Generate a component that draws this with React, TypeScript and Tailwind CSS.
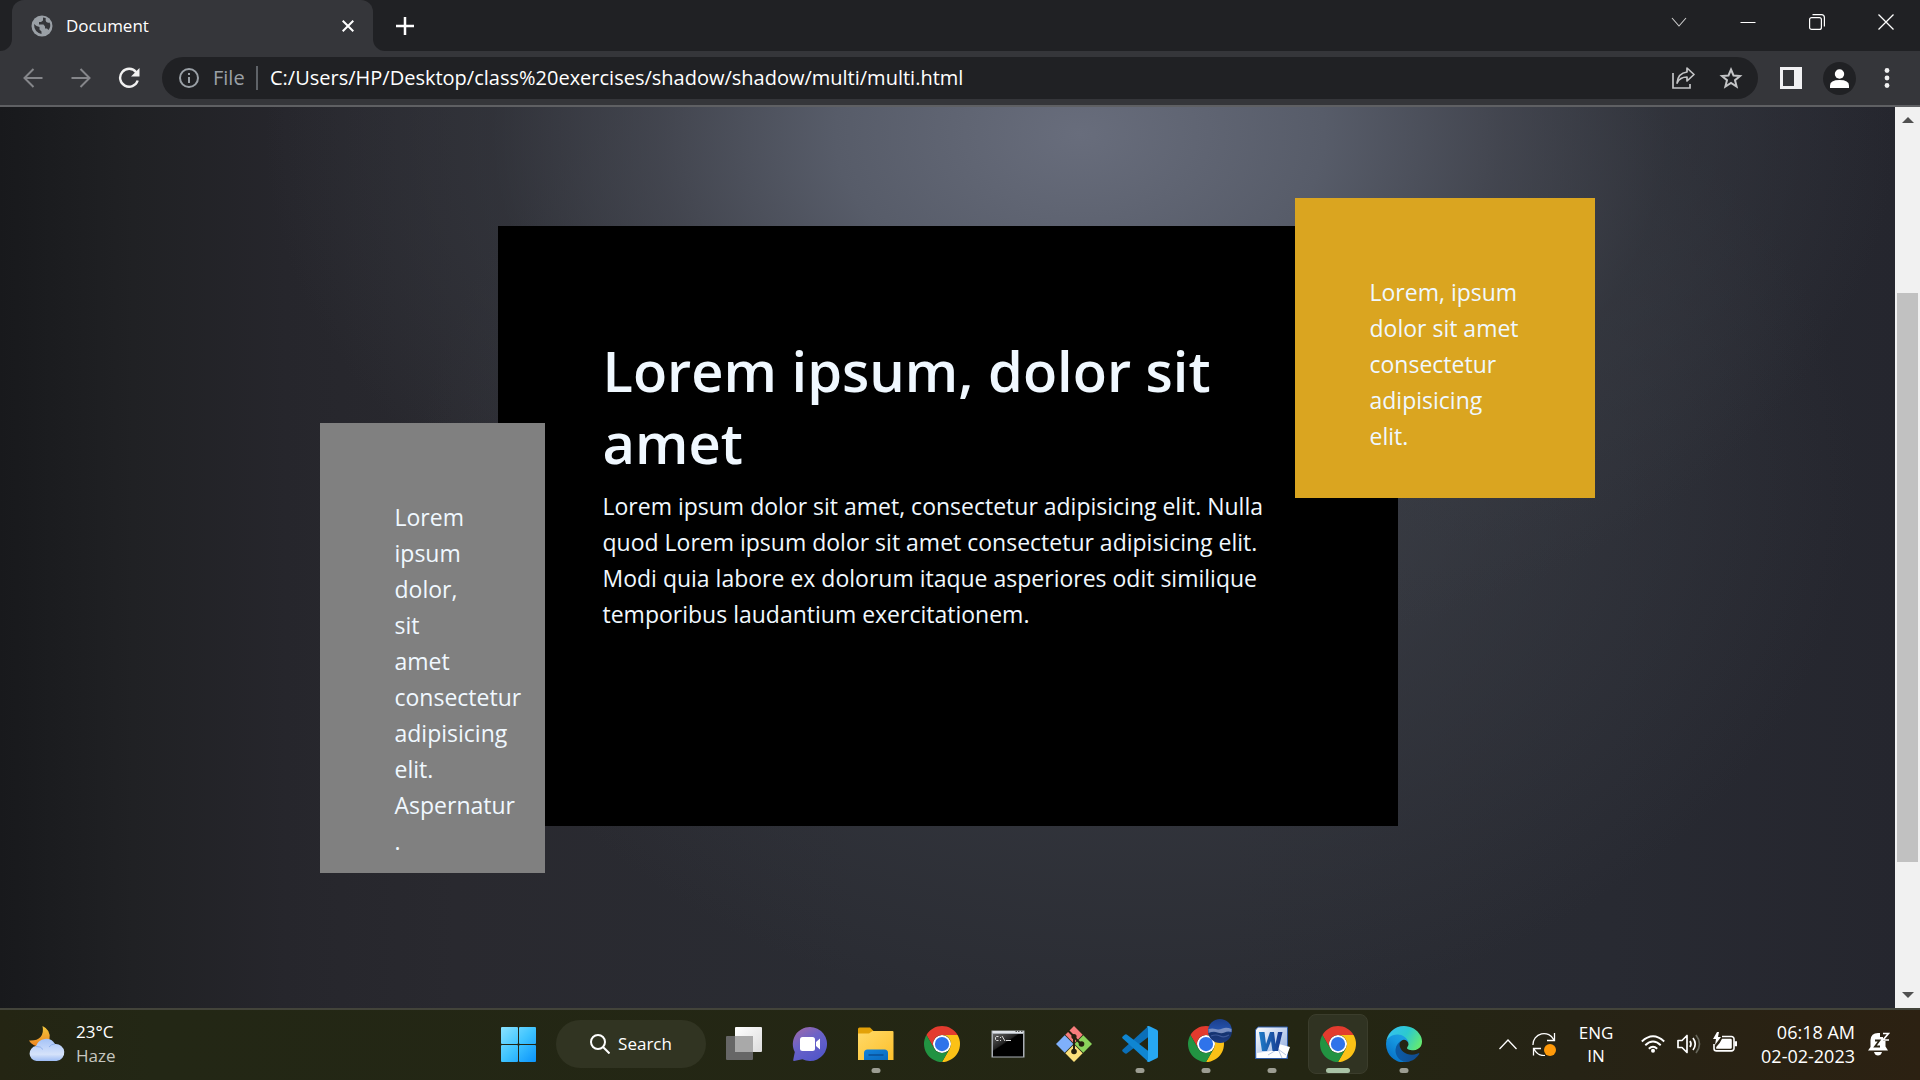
import React from "react";

function ChromeLogo() {
  return (
    <svg viewBox="0 0 48 48" className="h-9 w-9">
      <circle cx="24" cy="24" r="12" fill="#fff" />
      <path fill="#e33b2e" d="M24,12H44.78a24,24,0,0,0-41.56,0L13.61,30l.01,0A11.99,11.99,0,0,1,24,12Z" />
      <path fill="#fbc116" d="M34.39,30,24,48A24,24,0,0,0,44.78,12H24l0,.01A11.99,11.99,0,0,1,34.39,30Z" />
      <path fill="#229342" d="M13.61,30,3.22,12A24,24,0,0,0,24,48L34.39,30l0,0a11.99,11.99,0,0,1-20.78,0Z" />
      <circle cx="24" cy="24" r="9.5" fill="#2f73ea" />
    </svg>
  );
}

function ProfileChromeLogo() {
  return (
    <span className="relative">
      <ChromeLogo />
      <svg viewBox="0 0 24 24" className="absolute -top-[7px] left-5 h-6 w-6">
        <defs>
          <linearGradient id="sky" x1="0" y1="0" x2="0" y2="1">
            <stop offset="0" stopColor="#1b3f8c" />
            <stop offset=".4" stopColor="#2450a8" />
            <stop offset=".6" stopColor="#16336f" />
            <stop offset="1" stopColor="#1c3a80" />
          </linearGradient>
        </defs>
        <circle cx="12" cy="12" r="12" fill="url(#sky)" />
        <path d="M.5 10q4-1 7 0t7-.5 9 .5v3q-4-1-7 .5t-7 0-9 .5z" fill="#8fa0cc" opacity=".8" />
        <path d="M3 17q5-2 9 0t9-1" stroke="#3c5798" strokeWidth="1.200" fill="none" />
      </svg>
    </span>
  );
}

function StartLogo() {
  return (
    <svg viewBox="0 0 35 35" className="h-[35px] w-[35px]">
      <defs>
        <linearGradient id="win" gradientUnits="userSpaceOnUse" x1="0" y1="0" x2="35" y2="35">
          <stop offset="0" stopColor="#8be3ff" />
          <stop offset=".5" stopColor="#3fc4ff" />
          <stop offset="1" stopColor="#0a93fb" />
        </linearGradient>
      </defs>
      <g fill="url(#win)">
        <rect width="17" height="17" rx="1" />
        <rect x="18" width="17" height="17" rx="1" />
        <rect y="18" width="17" height="17" rx="1" />
        <rect x="18" y="18" width="17" height="17" rx="1" />
      </g>
    </svg>
  );
}

function TaskViewIcon() {
  return (
    <svg viewBox="0 0 36 36" className="h-9 w-9">
      <defs>
        <linearGradient id="tv" x1="0" y1="0" x2="1" y2="1">
          <stop offset="0" stopColor="#fff" />
          <stop offset="1" stopColor="#dcdcdc" />
        </linearGradient>
      </defs>
      <rect y="10" width="27" height="24" rx="1" fill="#666" />
      <rect x="9" y="1" width="27" height="25" rx="1" fill="url(#tv)" />
      <path d="M9 10h18v16H9z" fill="#a9a9a9" />
    </svg>
  );
}

function ChatIcon() {
  return (
    <svg viewBox="0 0 36 36" className="h-9 w-9">
      <defs>
        <linearGradient id="chat" x1="0" y1="0" x2=".6" y2="1">
          <stop offset="0" stopColor="#a46aa6" />
          <stop offset=".5" stopColor="#6a62c8" />
          <stop offset="1" stopColor="#5357c9" />
        </linearGradient>
      </defs>
      <path d="M18 1a17 17 0 1 1-7.600 32.200L2 35q-1-.2-.8-1l1.600-8A17 17 0 0 1 18 1z" fill="url(#chat)" />
      <rect x="8" y="11" width="15" height="14" rx="2.500" fill="#fff" />
      <path d="M24 16l4-3.500V23.500L24 20z" fill="#fff" />
    </svg>
  );
}

function ExplorerIcon() {
  return (
    <svg viewBox="0 0 36 36" className="h-9 w-9">
      <defs>
        <linearGradient id="fold" x1="0" y1="0" x2="1" y2="1">
          <stop offset="0" stopColor="#ffd968" />
          <stop offset="1" stopColor="#fdc02b" />
        </linearGradient>
        <linearGradient id="tray" x1="0" y1="0" x2="1" y2="1">
          <stop offset="0" stopColor="#1383dc" />
          <stop offset="1" stopColor="#0a69bd" />
        </linearGradient>
      </defs>
      <path d="M0 3q0-1.500 1.500-1.500H12L15.500 5 12 9H0z" fill="#e3a108" />
      <path d="M0 7.500h11L14.500 5H34.500q1 0 1 1V34H0z" fill="url(#fold)" />
      <path d="M6 34V27q0-3.500 3.500-3.500h17q3.500 0 3.500 3.500v7z" fill="url(#tray)" />
      <path d="M10.500 29h15" stroke="#0a4f96" strokeWidth="1.500" />
    </svg>
  );
}

function TerminalIcon() {
  return (
    <svg viewBox="0 0 36 36" className="h-9 w-9">
      <defs>
        <linearGradient id="cmd" x1="0" y1="0" x2=".7" y2=".8">
          <stop offset="0" stopColor="#666" />
          <stop offset=".5" stopColor="#222" />
          <stop offset=".55" stopColor="#000" />
        </linearGradient>
      </defs>
      <rect x="1.500" y="4.500" width="33" height="27" fill="#a9aeb5" />
      <rect x="2.500" y="5" width="31" height="2" fill="#dfe3e8" />
      <path d="M25.500 5.500h1.500m1 0h1.500m1.500 0h1.500" stroke="#555" />
      <rect x="3" y="8" width="30" height="22.500" fill="url(#cmd)" />
      <path d="M8.500 10.500H6.500L5.500 11.500v2l1 1h2M10.500 11v1M10.500 14v1M12 10l3 5M16 14.500h5" stroke="#ddd" fill="none" />
    </svg>
  );
}

function GitIcon() {
  return (
    <svg viewBox="0 0 36 36" className="h-9 w-9">
      <path fill="#f77c7c" d="M18 0l8.700 8.700L18 17.400 9.300 8.700z" />
      <path fill="#7fb0fb" d="M8.700 9.300L17.400 18 8.700 26.700 0 18z" />
      <path fill="#8bd35c" d="M27.300 9.300L36 18 27.300 26.700 18.600 18z" />
      <path fill="#fbe07c" d="M18 18.600l8.700 8.700L18 36 9.300 27.300z" />
      <path d="M12 4.500l6 6V25M18 11l7 7" stroke="#25200f" strokeWidth="2" fill="none" />
      <circle cx="18" cy="10.500" r="2.600" fill="#25200f" />
      <circle cx="18" cy="25.500" r="2.800" fill="#25200f" />
      <circle cx="25.500" cy="18" r="2.800" fill="#25200f" />
    </svg>
  );
}

function CodeIcon() {
  return (
    <svg viewBox="0 0 36 36" className="h-9 w-9">
      <path fill="#0b6fb8" d="M26.500 0L.7 23.400q-1 1.100 0 2.200l2 1.700q1 .8 2 .1L27 10.500z" />
      <path fill="#0f86d2" d="M26.500 36L.7 12.600q-1-1.100 0-2.200l2-1.700q1-.8 2-.1L27 25.500z" />
      <path fill="#27a7f2" d="M24.600 35q1.900 1.300 2.900.7l7.300-3.400q1.200-.6 1.200-1.900V5.600q0-1.300-1.200-1.900L27.500.3q-1.500-.6-2.900.8Q26 .6 26 3v30q0 2-1.400 2z" />
    </svg>
  );
}

function WordIcon() {
  return (
    <svg viewBox="0 0 36 36" className="h-9 w-9">
      <defs>
        <linearGradient id="wd" x1="0" y1="0" x2="1" y2="1">
          <stop offset="0" stopColor="#fff" />
          <stop offset=".4" stopColor="#cfdcf2" />
          <stop offset="1" stopColor="#8aa7dc" />
        </linearGradient>
        <linearGradient id="wl" x1="0" y1="0" x2="1" y2="0">
          <stop offset="0" stopColor="#1f7cc8" />
          <stop offset="1" stopColor="#15348b" />
        </linearGradient>
      </defs>
      <path d="M4 1H33.500V32.500H1.500V4z" fill="url(#wd)" stroke="#2f5ca8" />
      <path d="M3 32V27l20-3 2-6 11 3-4 11z" fill="#fff" />
      <path d="M14 29l10-6 8 6M24 23l4 9" stroke="#b9c7e2" fill="none" />
      <path d="M5 6h5.500l1.500 12L16 6h4l1.500 12L24 6h4.500L24 25h-5.500L17 15l-4 10H8z" fill="url(#wl)" />
    </svg>
  );
}

function EdgeIcon() {
  return (
    <svg viewBox="4.600 2.500 256 256" className="h-9 w-9">
      <defs>
        <linearGradient id="e1" x1=".2" y1=".5" x2="1" y2=".5">
          <stop offset="0" stopColor="#0c59a4" />
          <stop offset="1" stopColor="#114a8b" />
        </linearGradient>
        <linearGradient id="e2" x1=".8" y1=".2" x2=".3" y2="1">
          <stop offset="0" stopColor="#1b9de2" />
          <stop offset=".3" stopColor="#1595df" />
          <stop offset="1" stopColor="#0670c6" />
        </linearGradient>
        <linearGradient id="e3" x1="0" y1=".3" x2="1" y2=".7">
          <stop offset="0" stopColor="#35c1f1" />
          <stop offset=".5" stopColor="#2cc9cf" />
          <stop offset="1" stopColor="#66eb6e" />
        </linearGradient>
      </defs>
      <path fill="url(#e1)" d="M235.680 195.460a93.730 93.730 0 01-10.540 4.710 101.870 101.870 0 01-35.900 6.460c-47.320 0-88.540-32.550-88.540-74.320A31.480 31.480 0 01117.130 105c-42.800 1.800-53.800 46.400-53.800 72.530 0 73.880 68.090 81.370 82.760 81.370 7.910 0 19.840-2.300 27-4.560l1.310-.44a128.340 128.340 0 0066.600-52.800 4 4 0 00-5.320-5.640z" />
      <path fill="url(#e2)" d="M110.340 246.340A79.200 79.200 0 0187.600 225a80.720 80.720 0 0129.530-120c3.120-1.470 8.450-4.130 15.540-4a32.350 32.350 0 0125.690 13 31.880 31.880 0 016.360 18.660c0-.21 24.460-79.600-80-79.600-43.900 0-80 41.660-80 78.210a130.150 130.150 0 0012.110 56 128 128 0 00156.380 67.110 75.550 75.550 0 01-62.780-8z" />
      <path fill="url(#e3)" d="M156.940 153.460c-.81 1.050-3.300 2.500-3.300 5.660 0 2.610 1.700 5.120 4.720 7.230 14.380 10 41.490 8.680 41.560 8.680a59.560 59.560 0 0030.270-8.350 61.380 61.380 0 0030.430-52.880c.26-22.410-8-37.310-11.340-43.910C228.090 28.760 182.350 2.540 132.610 2.540a128 128 0 00-128 126.200c.48-36.540 36.800-66.050 80-66.050 3.500 0 23.460.34 42 10.070 16.340 8.580 24.900 18.940 30.850 29.210 6.180 10.670 7.280 24.150 7.280 29.520 0 5.370-2.740 13.330-7.800 19.970z" />
    </svg>
  );
}

function WeatherIcon() {
  return (
    <svg viewBox="0 0 36 36" className="h-9 w-9">
      <defs>
        <linearGradient id="moon" x1="0" y1="0" x2="0" y2="1">
          <stop offset="0" stopColor="#f3c83d" />
          <stop offset="1" stopColor="#ee8420" />
        </linearGradient>
        <linearGradient id="cloud" x1="0" y1="0" x2="0" y2="1">
          <stop offset="0" stopColor="#a5c3f7" />
          <stop offset=".7" stopColor="#d5e2fa" />
          <stop offset="1" stopColor="#9dbcf4" />
        </linearGradient>
      </defs>
      <path d="M13.500 0Q22 4 20.500 13 17 22 7 20 2 18 0 14.500 8 15 11.500 11 15 7 13.500 0z" fill="url(#moon)" />
      <path d="M7.500 35a7.500 7.500 0 0 1-.5-14.900A10.500 10.500 0 0 1 26 18a8.500 8.500 0 0 1 1.500 17z" fill="url(#cloud)" />
      <path d="M7 20.500q5-.5 7 3M20 21q2-3 6-3" stroke="#7fa3e6" strokeWidth="1" fill="none" opacity=".7" />
    </svg>
  );
}

type Task = { name: string; icon: React.ReactNode; running?: boolean; active?: boolean };

const tasks: Task[] = [
  { name: "Task view", icon: <TaskViewIcon /> },
  { name: "Chat", icon: <ChatIcon /> },
  { name: "File Explorer", icon: <ExplorerIcon />, running: true },
  { name: "Google Chrome", icon: <ChromeLogo /> },
  { name: "Command Prompt", icon: <TerminalIcon /> },
  { name: "Git", icon: <GitIcon /> },
  { name: "Visual Studio Code", icon: <CodeIcon />, running: true },
  { name: "Google Chrome, second profile", icon: <ProfileChromeLogo />, running: true },
  { name: "Word", icon: <WordIcon />, running: true },
  { name: "Google Chrome, active window", icon: <ChromeLogo />, active: true },
  { name: "Microsoft Edge", icon: <EdgeIcon />, running: true },
];

function TabStrip() {
  return (
    <header className="flex h-[51px] shrink-0 items-stretch bg-[#202124] text-white">
      <div className="flex w-3 items-end bg-[#35363a]">
        <div className="h-full w-3 rounded-br-xl bg-[#202124]" />
      </div>
      <div className="bg-[#202124]">
        <div className="flex h-full w-[361px] items-center rounded-t-xl bg-[#35363a] pr-[15px] pl-[19px]">
          <svg viewBox="0 0 22 22" className="mr-[13px] h-[22px] w-[22px]">
            <circle cx="11" cy="11" r="10.500" fill="#9aa0a6" />
            <path
              d="M3 9l2.500 2 3 1v2.500l2 2V19Q3 17 3 9zM12 2.500v3l-2 1.500H8v2.500h4.500l1.500 2v2h2l1.500 1.500Q20.500 11 18.500 7.500 15 8.500 14.500 5L15 3.500Q13.500 2.500 12 2.500z"
              fill="#35363a"
            />
          </svg>
          <span className="flex-1 text-[17px] leading-6">Document</span>
          <button type="button" aria-label="Close tab" className="flex h-5 w-5 items-center justify-center">
            <svg viewBox="0 0 12 12" className="h-3 w-3" stroke="#fff" strokeWidth="2">
              <path d="M.7.7l10.600 10.600M11.300.7L.7 11.300" />
            </svg>
          </button>
        </div>
      </div>
      <div className="w-3 bg-[#35363a]">
        <div className="h-full w-3 rounded-bl-xl bg-[#202124]" />
      </div>
      <button type="button" aria-label="New tab" className="flex w-10 items-center justify-center">
        <svg viewBox="0 0 18 18" className="h-[18px] w-[18px]" stroke="#fff" strokeWidth="2.500">
          <path d="M9 0v18M0 9h18" />
        </svg>
      </button>
      <div className="flex h-[43px] flex-1 justify-end">
        <button type="button" aria-label="Search tabs" className="flex w-[68px] items-center justify-center">
          <svg viewBox="0 0 16 16" className="h-4 w-4" fill="none" stroke="#ccc" strokeWidth="1.100">
            <path d="M1 4l7 8 7-8" />
          </svg>
        </button>
        <button type="button" aria-label="Minimize" className="flex w-[69px] items-center justify-center">
          <svg viewBox="0 0 16 16" className="h-4 w-4" stroke="#fff">
            <path d="M.5 8.500h15" />
          </svg>
        </button>
        <button type="button" aria-label="Restore" className="flex w-[69px] items-center justify-center">
          <svg viewBox="0 0 16 16" className="h-4 w-4" fill="none" stroke="#fff" strokeWidth="1.200">
            <rect x=".6" y="3.600" width="11.800" height="11.800" rx="2" />
            <path d="M3.500.6H12.400a3 3 0 0 1 3 3v9" />
          </svg>
        </button>
        <button type="button" aria-label="Close window" className="flex w-[69px] items-center justify-center">
          <svg viewBox="0 0 16 16" className="h-4 w-4" stroke="#fff" strokeWidth="1.300">
            <path d="M.5.5l15 15M15.500.5l-15 15" />
          </svg>
        </button>
      </div>
    </header>
  );
}

function Toolbar() {
  return (
    <nav aria-label="Browser toolbar" className="flex h-14 shrink-0 items-center border-b-2 border-[#5f6063] bg-[#35363a] px-[9px]">
      <button type="button" aria-label="Back" className="flex w-12 justify-center">
        <svg viewBox="0 0 20 20" className="h-5 w-5" fill="none" stroke="#85868a" strokeWidth="2">
          <path d="M19.500 10H2M10.500 1L1.500 10l9 9" />
        </svg>
      </button>
      <button type="button" aria-label="Forward" className="flex w-12 justify-center">
        <svg viewBox="0 0 20 20" className="h-5 w-5" fill="none" stroke="#85868a" strokeWidth="2">
          <path d="M.5 10H18M9.500 1l9 9-9 9" />
        </svg>
      </button>
      <button type="button" aria-label="Reload" className="flex w-12 justify-center">
        <svg viewBox="0 0 22 22" className="h-[22px] w-[22px]" fill="none" stroke="#f1f1f1" strokeWidth="2.400">
          <path d="M18.200 5.200A9 9 0 1 0 19.700 13.500" />
          <path d="M21.500 1v8.500H13z" fill="#f1f1f1" stroke="none" />
        </svg>
      </button>
      <div className="ml-[9px] flex h-[42px] flex-1 items-center rounded-full bg-[#202124] pr-[15px] pl-[17px]">
        <svg viewBox="0 0 20 20" className="h-5 w-5" fill="none" stroke="#9aa0a6" strokeWidth="2">
          <circle cx="10" cy="10" r="9" />
          <path d="M10 9v6M10 5v2" />
        </svg>
        <label htmlFor="address" className="ml-[14px] w-[43px] text-[20px] leading-7 text-[#9aa0a6]">
          File
        </label>
        <div className="h-6 w-[2px] bg-[#5f6368]" />
        <input
          id="address"
          defaultValue="C:/Users/HP/Desktop/class%20exercises/shadow/shadow/multi/multi.html"
          className="ml-3 min-w-0 flex-1 bg-transparent text-[20px] leading-7 text-white outline-none"
        />
        <button type="button" aria-label="Share" className="mr-3 flex w-12 justify-center">
          <svg viewBox="0 0 24 24" className="h-6 w-6" fill="none" stroke="#c4c5c7" strokeWidth="1.700">
            <path d="M2 7v15h17v-4" />
            <path d="M16 2l7 6.500-7 6.500v-4Q9 11 6 17 7 7 16 6z" strokeLinejoin="round" />
          </svg>
        </button>
        <button type="button" aria-label="Bookmark" className="flex w-6 justify-center">
          <svg viewBox="0 0 24 24" className="h-6 w-6" fill="none" stroke="#c4c5c7" strokeWidth="2">
            <path d="M12 3.500l2.500 6 6.500.5-5 4.200 1.600 6.300L12 17l-5.600 3.500L8 14.200 3 10l6.500-.5z" />
          </svg>
        </button>
      </div>
      <button type="button" aria-label="Side panel" className="ml-[9px] flex w-12 justify-center">
        <svg viewBox="0 0 22 22" className="h-[22px] w-[22px]">
          <rect width="22" height="22" fill="#f1f1f3" />
          <rect x="3" y="3" width="11" height="16" fill="#35363a" />
        </svg>
      </button>
      <button type="button" aria-label="Profile" className="flex w-12 justify-center">
        <svg viewBox="0 0 33 33" className="h-[33px] w-[33px]">
          <circle cx="16.500" cy="16.500" r="16.500" fill="#202124" />
          <circle cx="16.500" cy="12" r="4.700" fill="#fff" />
          <path d="M7 26v-2.500q0-5.500 9.500-5.500t9.500 5.500V26z" fill="#fff" />
        </svg>
      </button>
      <button type="button" aria-label="Menu" className="flex w-12 justify-center">
        <svg viewBox="0 0 6 20" className="h-5 w-[6px]" fill="#f1f1f1">
          <circle cx="3" cy="2.500" r="2.400" />
          <circle cx="3" cy="10" r="2.400" />
          <circle cx="3" cy="17.500" r="2.400" />
        </svg>
      </button>
    </nav>
  );
}

function Page() {
  return (
    <div className="flex min-h-0 flex-1">
      <main className="flex-1 overflow-hidden bg-[radial-gradient(ellipse_43%_60%_at_57%_3%,#686d7c_0%,#575c69_30%,rgba(70,73,83,0.85)_52%,rgba(57,60,68,0.5)_72%,rgba(46,48,56,0)_100%),radial-gradient(ellipse_38%_60%_at_60%_42%,#3f424a_0%,rgba(58,61,69,0.55)_50%,rgba(44,46,54,0)_100%),linear-gradient(90deg,#18191c_0%,#202124_7%,#26262c_15%,#29292f_24%,#2a2c33_45%,#2a2c33_65%,#282a32_85%,#25262e_100%)] pt-[119px]">
        <section className="relative mx-auto h-[600px] w-[900px] bg-black px-[105px] pt-[108px] text-[aliceblue]">
          <h1 className="mb-[10px] text-[56px] leading-[72px] font-semibold">Lorem ipsum, dolor sit amet</h1>
          <p className="text-[23px] leading-9">
            Lorem ipsum dolor sit amet, consectetur adipisicing elit. Nulla quod Lorem ipsum dolor sit amet consectetur
            adipisicing elit. Modi quia labore ex dolorum itaque asperiores odit similique temporibus laudantium
            exercitationem.
          </p>
          <aside className="absolute -top-7 left-[797px] h-[300px] w-[300px] bg-[goldenrod] pt-[76px] pr-[72px] pl-[75px]">
            <p className="text-[23px] leading-9">Lorem, ipsum dolor sit amet consectetur adipisicing elit.</p>
          </aside>
          <aside className="absolute top-[197px] -left-[178px] h-[450px] w-[225px] bg-[gray] px-[75px] pt-[76px]">
            <p className="text-[23px] leading-9">
              Lorem ipsum dolor, sit amet consectetur adipisicing elit. Aspernatur .
            </p>
          </aside>
        </section>
      </main>
      <div aria-hidden="true" className="flex w-[25px] flex-col items-center justify-between bg-[#f1f1f1]">
        <div className="flex h-[26px] items-center">
          <svg viewBox="0 0 12 6" className="h-[6px] w-3" fill="#505050">
            <path d="M6 0l6 6H0z" />
          </svg>
        </div>
        <div className="flex w-[21px] flex-1 flex-col">
          <div className="flex-[160]" />
          <div className="flex-[569] bg-[#c1c1c1]" />
          <div className="flex-[120]" />
        </div>
        <div className="flex h-[26px] items-center">
          <svg viewBox="0 0 12 6" className="h-[6px] w-3" fill="#505050">
            <path d="M6 6l6-6H0z" />
          </svg>
        </div>
      </div>
    </div>
  );
}

function Tray() {
  return (
    <div className="flex items-center justify-end pr-[30px] pb-[2px] text-[18px] leading-6 text-white">
      <button type="button" aria-label="Show hidden icons" className="mr-3 flex w-6 justify-center">
        <svg viewBox="0 0 18 12" className="h-3 w-[18px]" fill="none" stroke="#fff" strokeWidth="1.300">
          <path d="M.5 11L9 2l8.500 9" />
        </svg>
      </button>
      <svg viewBox="0 0 24 24" className="mr-[22px] h-6 w-6" fill="none" stroke="#fff" strokeWidth="1.300">
        <path d="M1 13a11 11 0 0 1 21-5M22.500 1v7.500H15M1.500 23.500V16.500H9M2 17q3.500 7 11 6.500" />
        <circle cx="18" cy="18" r="6" fill="#ff9a0a" stroke="none" />
      </svg>
      <span className="mr-[27px] w-9 text-center text-[17px] leading-[23px]">
        ENG
        <br />
        IN
      </span>
      <button type="button" aria-label="Network, volume and battery" className="mr-6 flex items-center gap-3">
        <svg viewBox="0 0 24 24" className="h-6 w-6" fill="none" stroke="#fff" strokeWidth="1.900">
          <path d="M.8 9.500q11.200-10.500 22.400 0M4.300 13.300q7.700-7.500 15.400 0M7.800 16.800q4.200-4 8.400 0" />
          <circle cx="12" cy="18.800" r="2" fill="#fff" stroke="none" />
        </svg>
        <svg viewBox="0 0 24 24" className="h-6 w-6" fill="none" stroke="#fff" strokeWidth="1.700">
          <path d="M1 8.500h4l5-5v17l-5-5H1z" strokeLinejoin="round" />
          <path d="M13 9q2 3 0 6M16 6q4.500 6 0 12" />
          <path d="M19 3q7 9 0 18" stroke="#66665a" />
        </svg>
        <svg viewBox="0 0 24 24" className="h-6 w-6">
          <path d="M9 4.500h9.500A2.500 2.500 0 0 1 21 7v9.400a2.500 2.500 0 0 1-2.500 2.500H3.500A2.500 2.500 0 0 1 1 16.400V12" fill="none" stroke="#fff" strokeWidth="1.600" />
          <path d="M9 6.700h8.500A1.300 1.300 0 0 1 18.800 8v7.400a1.300 1.300 0 0 1-1.300 1.300H3.200V15q3.500-3 5.800-8.300z" fill="#fff" />
          <path d="M21.500 9.300H24v5h-2.500zM4 0L0 7h3l-1 6 6-8H5l1-5z" fill="#fff" />
        </svg>
      </button>
      <span className="mr-[13px] text-right">
        06:18 AM
        <br />
        02-02-2023
      </span>
      <button type="button" aria-label="Notifications">
        <svg viewBox="0 0 22 24" className="h-6 w-[22px]" fill="#fff">
          <path d="M10 1Q3 1 2.500 8v7L0 18.500h20l-2.500-4V9H15V5h-3V1zM6 20h8q-1 3.500-4 3.500T6 20z" />
          <path d="M7 8.500h4.500l-4.500 6h5" fill="none" stroke="#2a2415" strokeWidth="1.800" />
          <path d="M15 1.500h5.500L15 8h6" fill="none" stroke="#fff" strokeWidth="1.700" />
        </svg>
      </button>
    </div>
  );
}

function Taskbar() {
  return (
    <footer className="grid h-[72px] shrink-0 grid-cols-[1fr_auto_1fr] items-center border-t-2 border-[#43443a] bg-[linear-gradient(90deg,#242513_0%,#232715_8%,#242613_70%,#262315_82%,#2c2112_100%)]">
      <div className="flex items-center pb-[2px] pl-[29px] text-[17px] leading-6">
        <WeatherIcon />
        <div className="ml-[11px]">
          <div className="text-white">23°C</div>
          <div className="text-[#c6c6c0]">Haze</div>
        </div>
      </div>
      <div className="flex items-center pb-[2px] pl-[2px]">
        <button type="button" aria-label="Start" className="flex w-[66px] justify-center">
          <StartLogo />
        </button>
        <button
          type="button"
          className="mx-[5px] flex h-12 w-[150px] items-center justify-center gap-2 rounded-full bg-[#313422] text-[17px] text-white"
        >
          <svg viewBox="0 0 20 20" className="h-5 w-5" fill="none" stroke="#fff" strokeWidth="2">
            <circle cx="8" cy="8" r="7" />
            <path d="M13 13l6.500 6.500" />
          </svg>
          Search
        </button>
        {tasks.map((task) => (
          <button
            key={task.name}
            type="button"
            aria-label={task.name}
            className={
              task.active
                ? "relative mx-[3px] flex h-[60px] w-[60px] items-center justify-center rounded-lg border border-[#3b3d2c] bg-[#303322]"
                : "relative mx-[3px] flex h-[60px] w-[60px] items-center justify-center"
            }
          >
            {task.icon}
            {task.running && <span className="absolute bottom-px left-1/2 h-[5px] w-[9px] -translate-x-1/2 rounded-full bg-[#9c9d92]" />}
            {task.active && <span className="absolute bottom-0 left-1/2 h-[5px] w-6 -translate-x-1/2 rounded-full bg-[#a9c3a6]" />}
          </button>
        ))}
      </div>
      <Tray />
    </footer>
  );
}

export default function App() {
  return (
    <div className="flex h-screen flex-col overflow-hidden font-['Open_Sans','Noto_Sans',sans-serif]">
      <TabStrip />
      <Toolbar />
      <Page />
      <Taskbar />
    </div>
  );
}
